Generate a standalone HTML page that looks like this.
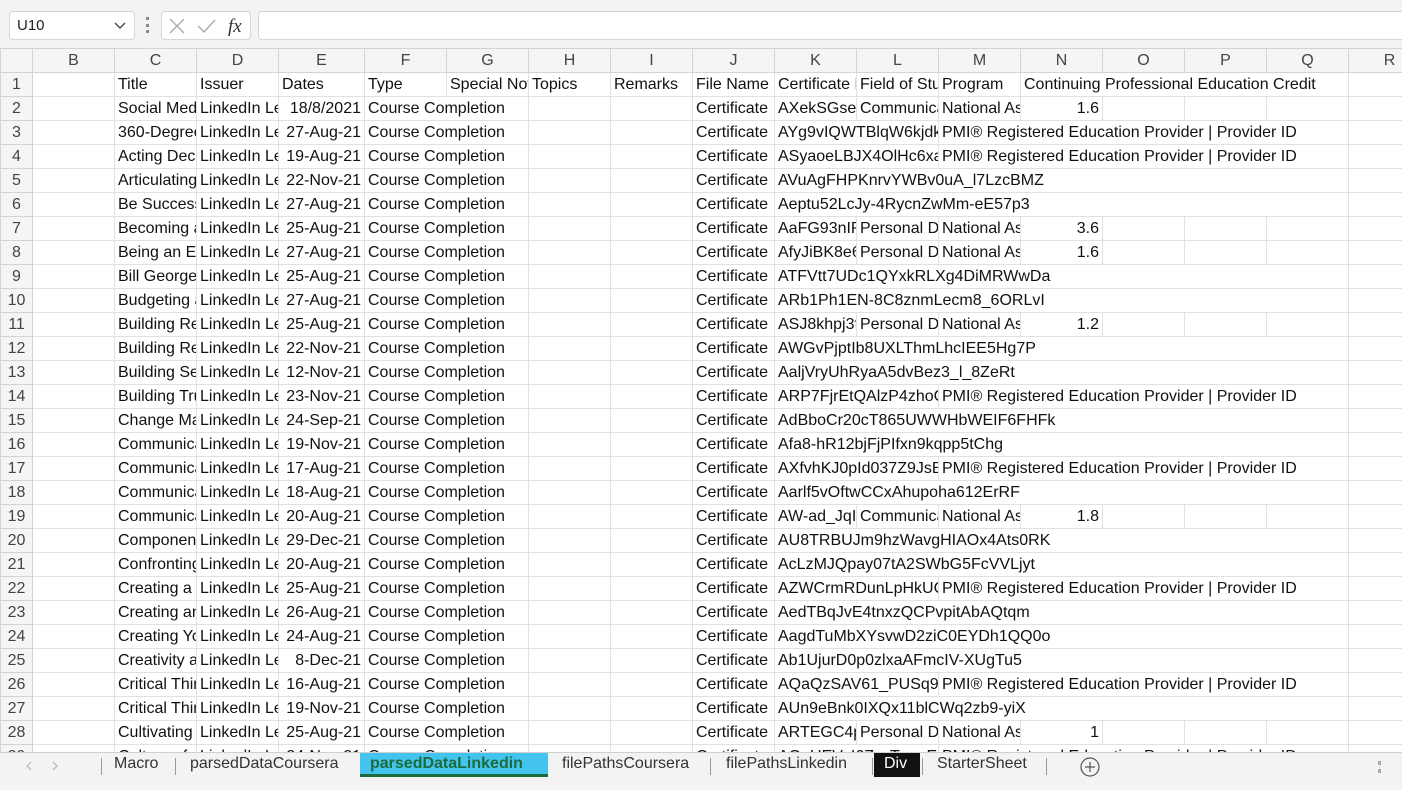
<!DOCTYPE html>
<html><head><meta charset="utf-8"><style>
*{margin:0;padding:0;box-sizing:border-box}
body{width:1402px;height:790px;overflow:hidden;background:#fff;font-family:"Liberation Sans",sans-serif;position:relative}
.top{position:absolute;left:0;top:0;width:1402px;height:48px;background:#f3f3f3}
.nb{position:absolute;left:9px;top:11px;width:126px;height:29px;background:#fff;border:1px solid #d6d6d6;border-radius:4px;font-size:15px;padding:5px 0 0 7px;color:#222}
.fx{position:absolute;left:161px;top:11px;width:90px;height:29px;background:#fff;border:1px solid #d6d6d6;border-radius:4px}
.fb{position:absolute;left:258px;top:11px;width:1150px;height:29px;background:#fff;border:1px solid #d6d6d6;border-radius:4px}
table{position:absolute;left:0;top:48px;width:1430px;border-collapse:collapse;table-layout:fixed;font-size:16px;color:#111}
td{height:24px;border:1px solid #e1e1e1;white-space:nowrap;overflow:hidden;padding:0 3px;line-height:22px}
tr.h td{background:#f5f5f5;color:#444;text-align:center;border-color:#d4d4d4;font-size:16px}
td.r{background:#f5f5f5;color:#444;text-align:center;border-color:#d4d4d4;padding:0}
.n{text-align:right}
.tabs{position:absolute;left:0;top:752px;width:1402px;height:38px;background:#f3f3f3;border-top:1px solid #d0d0d0;font-size:16px;color:#333}
.t{position:absolute;top:0;height:24px;line-height:22px;padding:0 10px}
.sep{position:absolute;top:5px;width:1px;height:17px;background:#999}
</style></head><body>
<div class="top">
<div class="nb">U10<svg style="position:absolute;right:8px;top:10px" width="12" height="8"><path d="M1 1 L6 6 L11 1" stroke="#444" fill="none" stroke-width="1.4"/></svg></div>
<div style="position:absolute;left:146px;top:17px;width:3px;height:16px;border-left:3px dotted #888"></div>
<div class="fx"><svg width="90" height="28"><path d="M8 7 L22 21 M22 7 L8 21" stroke="#aaa" stroke-width="1.4"/><path d="M36 14 L42 20 L53 8" stroke="#aaa" stroke-width="1.4" fill="none"/><text x="66" y="20" font-family="Liberation Serif" font-style="italic" font-size="19" fill="#333">fx</text></svg></div>
<div class="fb"></div>
</div>
<table>
<colgroup><col style="width:32px"><col style="width:82px"><col style="width:82px"><col style="width:82px"><col style="width:86px"><col style="width:82px"><col style="width:82px"><col style="width:82px"><col style="width:82px"><col style="width:82px"><col style="width:82px"><col style="width:82px"><col style="width:82px"><col style="width:82px"><col style="width:82px"><col style="width:82px"><col style="width:82px"><col style="width:82px"></colgroup>
<tr class="h"><td></td><td>B</td><td>C</td><td>D</td><td>E</td><td>F</td><td>G</td><td>H</td><td>I</td><td>J</td><td>K</td><td>L</td><td>M</td><td>N</td><td>O</td><td>P</td><td>Q</td><td>R</td></tr>
<tr><td class="r">1</td><td></td><td>Title</td><td>Issuer</td><td>Dates</td><td>Type</td><td>Special Notes</td><td>Topics</td><td>Remarks</td><td>File Name</td><td>Certificate Link</td><td>Field of Study</td><td>Program</td><td colspan="4">Continuing Professional Education Credit</td><td></td></tr>
<tr><td class="r">2</td><td></td><td>Social Media</td><td>LinkedIn Learning</td><td class="n">18/8/2021</td><td colspan="2">Course Completion</td><td></td><td></td><td>Certificate</td><td>AXekSGse2xx</td><td>Communication</td><td>National Assoc</td><td class="n">1.6</td><td></td><td></td><td></td><td></td></tr>
<tr><td class="r">3</td><td></td><td>360-Degree</td><td>LinkedIn Learning</td><td class="n">27-Aug-21</td><td colspan="2">Course Completion</td><td></td><td></td><td>Certificate</td><td colspan="2">AYg9vIQWTBlqW6kjdk</td><td colspan="5">PMI® Registered Education Provider | Provider ID</td><td></td></tr>
<tr><td class="r">4</td><td></td><td>Acting Decisively</td><td>LinkedIn Learning</td><td class="n">19-Aug-21</td><td colspan="2">Course Completion</td><td></td><td></td><td>Certificate</td><td colspan="2">ASyaoeLBJX4OlHc6xal</td><td colspan="5">PMI® Registered Education Provider | Provider ID</td><td></td></tr>
<tr><td class="r">5</td><td></td><td>Articulating</td><td>LinkedIn Learning</td><td class="n">22-Nov-21</td><td colspan="2">Course Completion</td><td></td><td></td><td>Certificate</td><td colspan="7">AVuAgFHPKnrvYWBv0uA_l7LzcBMZ</td><td></td></tr>
<tr><td class="r">6</td><td></td><td>Be Successful</td><td>LinkedIn Learning</td><td class="n">27-Aug-21</td><td colspan="2">Course Completion</td><td></td><td></td><td>Certificate</td><td colspan="7">Aeptu52LcJy-4RycnZwMm-eE57p3</td><td></td></tr>
<tr><td class="r">7</td><td></td><td>Becoming a</td><td>LinkedIn Learning</td><td class="n">25-Aug-21</td><td colspan="2">Course Completion</td><td></td><td></td><td>Certificate</td><td>AaFG93nIPxx</td><td>Personal Dev</td><td>National Assoc</td><td class="n">3.6</td><td></td><td></td><td></td><td></td></tr>
<tr><td class="r">8</td><td></td><td>Being an Ethical</td><td>LinkedIn Learning</td><td class="n">27-Aug-21</td><td colspan="2">Course Completion</td><td></td><td></td><td>Certificate</td><td>AfyJiBK8e6xx</td><td>Personal Dev</td><td>National Assoc</td><td class="n">1.6</td><td></td><td></td><td></td><td></td></tr>
<tr><td class="r">9</td><td></td><td>Bill George</td><td>LinkedIn Learning</td><td class="n">25-Aug-21</td><td colspan="2">Course Completion</td><td></td><td></td><td>Certificate</td><td colspan="7">ATFVtt7UDc1QYxkRLXg4DiMRWwDa</td><td></td></tr>
<tr><td class="r">10</td><td></td><td>Budgeting and</td><td>LinkedIn Learning</td><td class="n">27-Aug-21</td><td colspan="2">Course Completion</td><td></td><td></td><td>Certificate</td><td colspan="7">ARb1Ph1EN-8C8znmLecm8_6ORLvI</td><td></td></tr>
<tr><td class="r">11</td><td></td><td>Building Resilience</td><td>LinkedIn Learning</td><td class="n">25-Aug-21</td><td colspan="2">Course Completion</td><td></td><td></td><td>Certificate</td><td>ASJ8khpj3fxx</td><td>Personal Dev</td><td>National Assoc</td><td class="n">1.2</td><td></td><td></td><td></td><td></td></tr>
<tr><td class="r">12</td><td></td><td>Building Relationships</td><td>LinkedIn Learning</td><td class="n">22-Nov-21</td><td colspan="2">Course Completion</td><td></td><td></td><td>Certificate</td><td colspan="7">AWGvPjptIb8UXLThmLhcIEE5Hg7P</td><td></td></tr>
<tr><td class="r">13</td><td></td><td>Building Self</td><td>LinkedIn Learning</td><td class="n">12-Nov-21</td><td colspan="2">Course Completion</td><td></td><td></td><td>Certificate</td><td colspan="7">AaljVryUhRyaA5dvBez3_l_8ZeRt</td><td></td></tr>
<tr><td class="r">14</td><td></td><td>Building Trust</td><td>LinkedIn Learning</td><td class="n">23-Nov-21</td><td colspan="2">Course Completion</td><td></td><td></td><td>Certificate</td><td colspan="2">ARP7FjrEtQAlzP4zhoG</td><td colspan="5">PMI® Registered Education Provider | Provider ID</td><td></td></tr>
<tr><td class="r">15</td><td></td><td>Change Management</td><td>LinkedIn Learning</td><td class="n">24-Sep-21</td><td colspan="2">Course Completion</td><td></td><td></td><td>Certificate</td><td colspan="7">AdBboCr20cT865UWWHbWEIF6FHFk</td><td></td></tr>
<tr><td class="r">16</td><td></td><td>Communication</td><td>LinkedIn Learning</td><td class="n">19-Nov-21</td><td colspan="2">Course Completion</td><td></td><td></td><td>Certificate</td><td colspan="7">Afa8-hR12bjFjPIfxn9kqpp5tChg</td><td></td></tr>
<tr><td class="r">17</td><td></td><td>Communication</td><td>LinkedIn Learning</td><td class="n">17-Aug-21</td><td colspan="2">Course Completion</td><td></td><td></td><td>Certificate</td><td colspan="2">AXfvhKJ0pId037Z9JsB</td><td colspan="5">PMI® Registered Education Provider | Provider ID</td><td></td></tr>
<tr><td class="r">18</td><td></td><td>Communication</td><td>LinkedIn Learning</td><td class="n">18-Aug-21</td><td colspan="2">Course Completion</td><td></td><td></td><td>Certificate</td><td colspan="7">Aarlf5vOftwCCxAhupoha612ErRF</td><td></td></tr>
<tr><td class="r">19</td><td></td><td>Communication</td><td>LinkedIn Learning</td><td class="n">20-Aug-21</td><td colspan="2">Course Completion</td><td></td><td></td><td>Certificate</td><td>AW-ad_JqIxxx</td><td>Communication</td><td>National Assoc</td><td class="n">1.8</td><td></td><td></td><td></td><td></td></tr>
<tr><td class="r">20</td><td></td><td>Components</td><td>LinkedIn Learning</td><td class="n">29-Dec-21</td><td colspan="2">Course Completion</td><td></td><td></td><td>Certificate</td><td colspan="7">AU8TRBUJm9hzWavgHIAOx4Ats0RK</td><td></td></tr>
<tr><td class="r">21</td><td></td><td>Confronting</td><td>LinkedIn Learning</td><td class="n">20-Aug-21</td><td colspan="2">Course Completion</td><td></td><td></td><td>Certificate</td><td colspan="7">AcLzMJQpay07tA2SWbG5FcVVLjyt</td><td></td></tr>
<tr><td class="r">22</td><td></td><td>Creating a</td><td>LinkedIn Learning</td><td class="n">25-Aug-21</td><td colspan="2">Course Completion</td><td></td><td></td><td>Certificate</td><td colspan="2">AZWCrmRDunLpHkUCxx</td><td colspan="5">PMI® Registered Education Provider | Provider ID</td><td></td></tr>
<tr><td class="r">23</td><td></td><td>Creating an</td><td>LinkedIn Learning</td><td class="n">26-Aug-21</td><td colspan="2">Course Completion</td><td></td><td></td><td>Certificate</td><td colspan="7">AedTBqJvE4tnxzQCPvpitAbAQtqm</td><td></td></tr>
<tr><td class="r">24</td><td></td><td>Creating Your</td><td>LinkedIn Learning</td><td class="n">24-Aug-21</td><td colspan="2">Course Completion</td><td></td><td></td><td>Certificate</td><td colspan="7">AagdTuMbXYsvwD2ziC0EYDh1QQ0o</td><td></td></tr>
<tr><td class="r">25</td><td></td><td>Creativity and</td><td>LinkedIn Learning</td><td class="n">8-Dec-21</td><td colspan="2">Course Completion</td><td></td><td></td><td>Certificate</td><td colspan="7">Ab1UjurD0p0zlxaAFmcIV-XUgTu5</td><td></td></tr>
<tr><td class="r">26</td><td></td><td>Critical Thinking</td><td>LinkedIn Learning</td><td class="n">16-Aug-21</td><td colspan="2">Course Completion</td><td></td><td></td><td>Certificate</td><td colspan="2">AQaQzSAV61_PUSq9N</td><td colspan="5">PMI® Registered Education Provider | Provider ID</td><td></td></tr>
<tr><td class="r">27</td><td></td><td>Critical Thinking</td><td>LinkedIn Learning</td><td class="n">19-Nov-21</td><td colspan="2">Course Completion</td><td></td><td></td><td>Certificate</td><td colspan="7">AUn9eBnk0IXQx11blCWq2zb9-yiX</td><td></td></tr>
<tr><td class="r">28</td><td></td><td>Cultivating</td><td>LinkedIn Learning</td><td class="n">25-Aug-21</td><td colspan="2">Course Completion</td><td></td><td></td><td>Certificate</td><td>ARTEGC4pxx</td><td>Personal Dev</td><td>National Assoc</td><td class="n">1</td><td></td><td></td><td></td><td></td></tr>
<tr><td class="r">29</td><td></td><td>Culture of</td><td>LinkedIn Learning</td><td class="n">24-Nov-21</td><td colspan="2">Course Completion</td><td></td><td></td><td>Certificate</td><td colspan="2">AOaUEVzI6ZxxTwxxEbFF</td><td colspan="5">PMI® Registered Education Provider | Provider ID</td><td></td></tr>
</table>
<div class="tabs">
<svg style="position:absolute;left:22px;top:7px" width="40" height="12"><path d="M9 2 L5 6 L9 10" fill="none" stroke="#bbb" stroke-width="1.3"/><path d="M31 2 L35 6 L31 10" fill="none" stroke="#bbb" stroke-width="1.3"/></svg>
<div class="sep" style="left:101px"></div>
<div class="t" style="left:104px">Macro</div>
<div class="sep" style="left:175px"></div>
<div class="t" style="left:180px">parsedDataCoursera</div>
<div class="t" style="left:360px;width:188px;background:#43c4ef;color:#1d6b3a;font-weight:bold;border-bottom:3px solid #1d6b3a">parsedDataLinkedin</div>
<div class="t" style="left:552px">filePathsCoursera</div>
<div class="sep" style="left:710px"></div>
<div class="t" style="left:716px">filePathsLinkedin</div>
<div class="sep" style="left:872px"></div>
<div class="t" style="left:874px;width:46px;background:#111;color:#fff;padding:0 0 0 10px">Div</div>
<div class="sep" style="left:922px"></div>
<div class="t" style="left:927px">StarterSheet</div>
<div class="sep" style="left:1046px"></div>
<svg style="position:absolute;left:1079px;top:3px" width="22" height="22"><circle cx="11" cy="11" r="9" fill="none" stroke="#555" stroke-width="1.2"/><path d="M11 6 V16 M6 11 H16" stroke="#555" stroke-width="1.2"/></svg>
<div style="position:absolute;left:1378px;top:8px;width:3px;height:12px;border-left:3px dotted #aaa"></div>
</div>
</body></html>
